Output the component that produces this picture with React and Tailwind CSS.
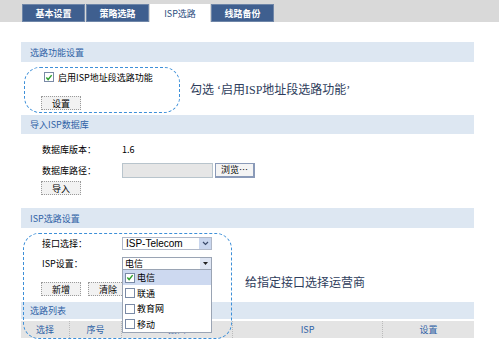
import React from "react";

const sans = { fontFamily: '"Noto Sans CJK SC", "Liberation Sans", sans-serif' };
const serif = { fontFamily: '"Liberation Serif", "Noto Sans CJK SC", serif' };

function Check() {
  return (
    <svg width="9" height="9" viewBox="0 0 9 9" className="block">
      <path d="M1.5 4.5 L3.5 6.8 L7.5 1.8" fill="none" stroke="#2fa02f" strokeWidth="1.6" />
    </svg>
  );
}

function Box({ checked }) {
  return (
    <span className="flex h-[10px] w-[10px] items-center justify-center border border-[#7a8aa6] bg-white">
      {checked ? <Check /> : null}
    </span>
  );
}

function Btn({ children, w = "w-[40px]" }) {
  return (
    <div className={`flex h-[14px] ${w} items-center justify-center border border-dotted border-[#9a9a9a] bg-[#f2f2f2] text-[9px] leading-none text-black`}>
      {children}
    </div>
  );
}

function Header({ children, h = "h-[20px]" }) {
  return (
    <div className={`flex ${h} items-center bg-[#dde7f2] pl-[9px] text-[9px] leading-none text-[#2f62a6]`}>
      {children}
    </div>
  );
}

function Tab({ children, active }) {
  return active ? (
    <div className="flex h-[18px] w-[60px] items-center justify-center bg-white text-[9px] leading-none text-[#2c4e80]">
      {children}
    </div>
  ) : (
    <div className="flex h-[18px] w-[63px] items-center justify-center border border-[#6f86a8] bg-[#3f5f8f] text-[9px] font-bold leading-none text-white">
      {children}
    </div>
  );
}

export default function App() {
  return (
    <div className="relative h-[341px] w-[499px] overflow-hidden bg-white" style={sans}>
      {/* tab strip */}
      <div className="flex h-[22px] items-end gap-[1px] bg-[#d9d9d9] pl-[22px]">
        <Tab>基本设置</Tab>
        <Tab>策略选路</Tab>
        <Tab active>ISP选路</Tab>
        <Tab>线路备份</Tab>
      </div>

      <div className="ml-[21px] mt-[20px] flex w-[453px] flex-col">
        <Header>选路功能设置</Header>
        <div className="flex h-[53px] flex-col pl-[20px] pt-[10px]">
          <div className="flex h-[10px] items-center gap-[4px] pl-[3px] text-[9px] leading-none text-black">
            <Box checked />
            <span>启用ISP地址段选路功能</span>
          </div>
          <div className="mt-[14px]">
            <Btn>设置</Btn>
          </div>
        </div>

        <Header h="h-[19px]">导入ISP数据库</Header>
        <div className="flex h-[74px] flex-col pt-[7px] text-[9px] leading-none text-black">
          <div className="flex h-[16px] items-center">
            <span className="w-[80px] pl-[21px]">数据库版本：</span>
            <span className="pl-[21px]">1.6</span>
          </div>
          <div className="mt-[5px] flex h-[16px] items-center">
            <span className="w-[101px] pl-[21px]">数据库路径：</span>
            <div className="h-[15px] w-[91px] border border-[#b8c4cc] bg-[#e6e6e6]" />
            <div className="ml-[2px] flex h-[15px] w-[40px] items-center justify-center border border-[#8a9ab8] border-b-2 border-r-2 bg-[#f4f4f4]">
              浏览…
            </div>
          </div>
          <div className="mt-[3px] pl-[20px]">
            <Btn>导入</Btn>
          </div>
        </div>

        <Header>ISP选路设置</Header>
        <div className="flex h-[74px] flex-col pt-[9px] text-[9px] leading-none text-black">
          <div className="flex h-[13px] items-center">
            <span className="w-[101px] pl-[21px]">接口选择：</span>
            <div className="flex h-[13px] w-[90px] items-center justify-between border border-[#b0b8c8] bg-white pl-[3px] text-[10px]" style={{ fontFamily: '"Liberation Sans", sans-serif' }}>
              <span>ISP-Telecom</span>
              <span className="flex h-full w-[12px] items-center justify-center bg-[#c9d6ee]">
                <svg width="7" height="5" viewBox="0 0 7 5"><path d="M1 1 L3.5 3.5 L6 1" fill="none" stroke="#3a4a6a" strokeWidth="1.2" /></svg>
              </span>
            </div>
          </div>
          <div className="mt-[7px] flex h-[13px] items-center">
            <span className="w-[101px] pl-[21px]">ISP设置：</span>
            <div className="flex h-[13px] w-[90px] items-center justify-between border border-[#9aa4b4] bg-white pl-[2px]">
              <span>电信</span>
              <span className="flex h-full w-[11px] items-center justify-center bg-[#dfe6f4]">
                <svg width="5" height="3" viewBox="0 0 5 3"><path d="M0 0 L5 0 L2.5 3 Z" fill="#222" /></svg>
              </span>
            </div>
          </div>
          <div className="mt-[12px] flex gap-[7px] pl-[20px]">
            <Btn>新增</Btn>
            <Btn>清除</Btn>
          </div>
        </div>

        <Header h="h-[17px]">选路列表</Header>
        <div className="mt-[2px] flex h-[17px] bg-[#e4e4e4] text-[9px] leading-none text-[#2f62a6]">
          <div className="flex w-[49px] items-center justify-center border-r border-dotted border-[#bbb]">选择</div>
          <div className="flex w-[52px] items-center justify-center border-r border-dotted border-[#bbb]">序号</div>
          <div className="flex w-[111px] items-center justify-center border-r border-dotted border-[#bbb]">接口</div>
          <div className="flex w-[150px] items-center justify-center border-r border-dotted border-[#bbb]">ISP</div>
          <div className="flex flex-1 items-center justify-center">设置</div>
        </div>
      </div>

      {/* dropdown menu overlay */}
      <div className="absolute left-[122px] top-[269px] flex w-[90px] flex-col border border-[#9aa4b4] bg-white text-[9px] leading-none text-black">
        <div className="flex h-[15px] items-center gap-[2px] bg-[#cdd9f0] pl-[2px]">
          <Box checked />
          <span>电信</span>
        </div>
        <div className="flex h-[16px] items-center gap-[2px] pl-[2px]">
          <Box />
          <span>联通</span>
        </div>
        <div className="flex h-[15px] items-center gap-[2px] pl-[2px]">
          <Box />
          <span>教育网</span>
        </div>
        <div className="flex h-[16px] items-center gap-[2px] pl-[2px]">
          <Box />
          <span>移动</span>
        </div>
      </div>

      {/* annotation outlines */}
      <div className="pointer-events-none absolute left-[24px] top-[67px] h-[46px] w-[156px] rounded-[16px] border-[1.5px] border-dashed border-[#3d8fd8]" />
      <div className="pointer-events-none absolute left-[23px] top-[233px] h-[106px] w-[209px] rounded-[16px] border-[1.5px] border-dashed border-[#3d8fd8]" />

      {/* annotation texts */}
      <div className="absolute left-[190px] top-[84px] text-[12px] leading-none text-[#2e3d5c]" style={serif}>
        勾选 ‘启用ISP地址段选路功能’
      </div>
      <div className="absolute left-[245px] top-[277px] text-[12px] leading-none text-[#2e3d5c]" style={serif}>
        给指定接口选择运营商
      </div>
    </div>
  );
}
